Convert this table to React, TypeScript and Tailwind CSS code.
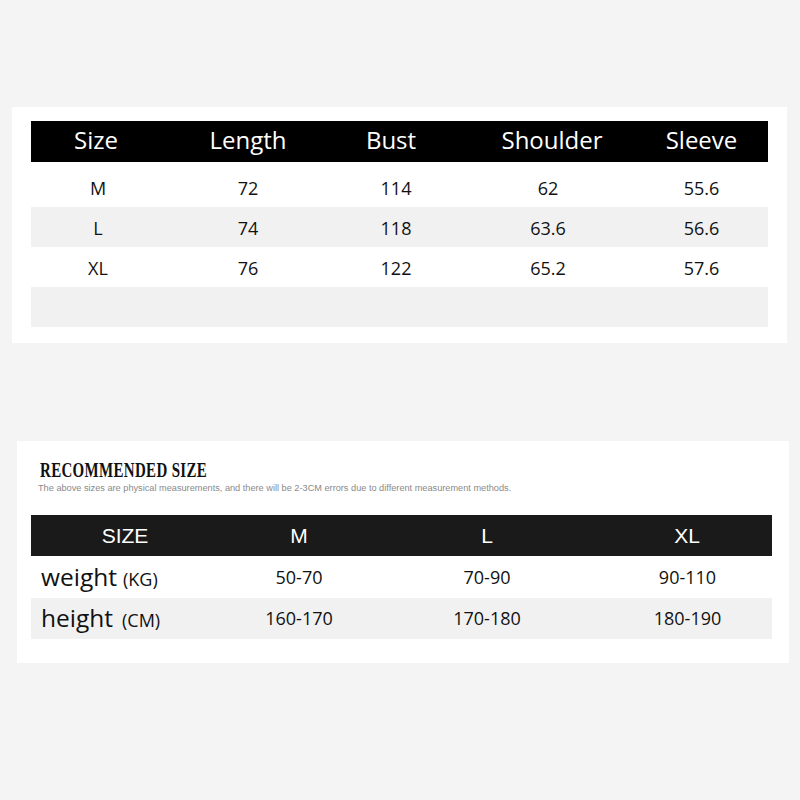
import React from "react";

const sizeRows = [
  { size: "M", length: "72", bust: "114", shoulder: "62", sleeve: "55.6" },
  { size: "L", length: "74", bust: "118", shoulder: "63.6", sleeve: "56.6" },
  { size: "XL", length: "76", bust: "122", shoulder: "65.2", sleeve: "57.6" },
];

const topCols = "grid grid-cols-[134px_166px_130px_174px_133px]";
const bottomCols = "grid grid-cols-[188px_160px_216px_177px]";

export default function App() {
  return (
    <div className="w-[800px] h-[800px] bg-[#f4f4f4] pt-[107px] font-['Open_Sans',sans-serif]">
      {/* Measurement table */}
      <div className="ml-[12px] w-[775px] bg-white pt-[14px] px-[19px] pb-[16px]">
        <div className={`${topCols} h-[41px] pb-[4px] bg-black text-white text-[24px] items-center`}>
          <div className="text-center pr-[4px]">Size</div>
          <div className="text-center">Length</div>
          <div className="text-center pr-[10px]">Bust</div>
          <div className="text-center pl-[8px]">Shoulder</div>
          <div className="text-center">Sleeve</div>
        </div>
        {sizeRows.map((r, i) => (
          <div
            key={r.size}
            className={`${topCols} items-center text-[18px] text-[#111] ${
              i === 0 ? "h-[45px] pt-[8px]" : "h-[40px] pt-[2px]"
            } ${i === 1 ? "bg-[#f1f1f1]" : "bg-white"}`}
          >
            <div className="text-center">{r.size}</div>
            <div className="text-center">{r.length}</div>
            <div className="text-center">{r.bust}</div>
            <div className="text-center">{r.shoulder}</div>
            <div className="text-center">{r.sleeve}</div>
          </div>
        ))}
        <div className="h-[40px] bg-[#f1f1f1]" />
      </div>

      {/* Recommended size */}
      <div className="mt-[98px] ml-[17px] w-[772px] bg-white pt-[18px] pl-[14px] pr-[17px] pb-[24px]">
        <div className="pl-[9px] h-[22px] leading-[22px]">
          <span className="inline-block origin-left scale-x-[0.68] font-['Liberation_Serif',serif] font-bold text-[22px] text-[#111] tracking-[0.5px] whitespace-nowrap">
            RECOMMENDED SIZE
          </span>
        </div>
        <div className="pl-[7px] mt-[1px] leading-[12px] text-[9.2px] text-[#8a8a8a] font-['Liberation_Sans',sans-serif] whitespace-nowrap">
          The above sizes are physical measurements, and there will be 2-3CM errors due to different measurement methods.
        </div>
        <div className={`${bottomCols} mt-[21px] h-[41px] pt-[1px] bg-[#1a1a1a] text-white text-[21px] items-center font-['Liberation_Sans',sans-serif]`}>
          <div className="text-center">SIZE</div>
          <div className="text-center">M</div>
          <div className="text-center">L</div>
          <div className="text-center pl-[7px]">XL</div>
        </div>
        <div className={`${bottomCols} h-[42px] items-center text-[18px] text-[#111]`}>
          <div className="pl-[10px] flex items-baseline">
            <span className="text-[24.5px]">weight</span>
            <span className="text-[18px] ml-[6px]">(KG)</span>
          </div>
          <div className="text-center">50-70</div>
          <div className="text-center">70-90</div>
          <div className="text-center pl-[8px]">90-110</div>
        </div>
        <div className={`${bottomCols} h-[41px] items-center text-[18px] text-[#111] bg-[#f1f1f1]`}>
          <div className="pl-[10px] flex items-baseline">
            <span className="text-[24.5px]">height</span>
            <span className="text-[18px] ml-[9px]">(CM)</span>
          </div>
          <div className="text-center">160-170</div>
          <div className="text-center">170-180</div>
          <div className="text-center pl-[8px]">180-190</div>
        </div>
      </div>
    </div>
  );
}
